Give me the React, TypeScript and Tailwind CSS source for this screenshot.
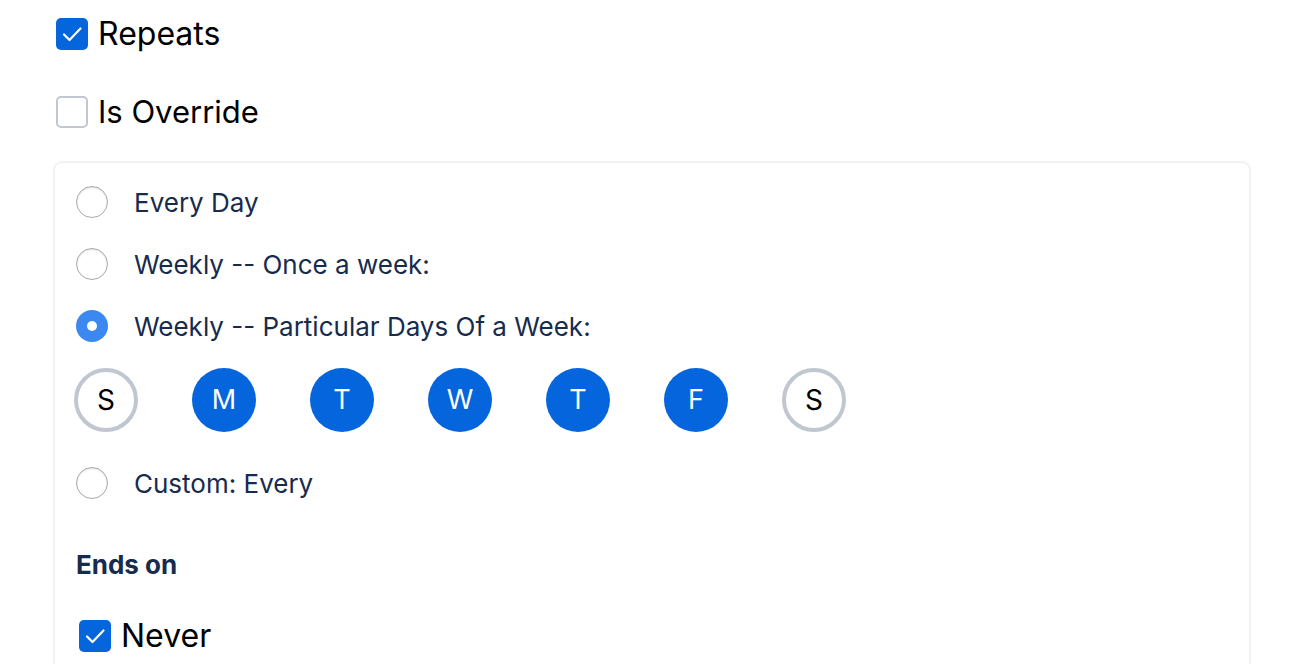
import React, { useState } from 'react';

const DAYS = [
  { label: 'S', on: false },
  { label: 'M', on: true },
  { label: 'T', on: true },
  { label: 'W', on: true },
  { label: 'T', on: true },
  { label: 'F', on: true },
  { label: 'S', on: false },
];

const OPTIONS = ['Every Day', 'Weekly -- Once a week:', 'Weekly -- Particular Days Of a Week:'];

const Check = ({ checked }: { checked: boolean }) =>
  checked ? (
    <span className="flex h-8 w-8 shrink-0 items-center justify-center rounded-[5px] bg-[#0565dc]">
      <svg viewBox="0 0 32 32" className="h-8 w-8" fill="none" stroke="white" strokeWidth="2.2" strokeLinecap="round" strokeLinejoin="round">
        <path d="M8 16.5l5.5 5.5L24.5 10.5" />
      </svg>
    </span>
  ) : (
    <span className="h-8 w-8 shrink-0 rounded-[5px] border-2 border-[#c1c7d0] bg-white" />
  );

const Radio = ({ checked }: { checked: boolean }) =>
  checked ? (
    <span className="flex h-8 w-8 shrink-0 items-center justify-center rounded-full bg-[#3b88f0]">
      <span className="h-[10px] w-[10px] rounded-full bg-white" />
    </span>
  ) : (
    <span className="h-8 w-8 shrink-0 rounded-full border border-[#a9a9a9] bg-white shadow-[inset_0_1px_2px_rgba(0,0,0,0.12)]" />
  );

export default function App() {
  const [selected] = useState(2);

  return (
    <div className="min-h-[664px] bg-white font-['Inter',sans-serif]">
      <div className="pl-[56px] pr-[39px] pt-[18px]">
        <label className="flex h-8 items-center gap-[10px] text-[32px] text-black">
          <Check checked />
          <span>Repeats</span>
        </label>
        <label className="mt-[46px] flex h-8 items-center gap-[10px] text-[31px] text-black">
          <Check checked={false} />
          <span>Is Override</span>
        </label>
      </div>

      <div className="ml-[53px] mr-[39px] mt-[33px] rounded-[9px] border-2 border-[#f2f2f2] pb-6 pl-[21px] pt-[23px]">
        <div className="flex flex-col gap-[30px]">
          {OPTIONS.map((opt, i) => (
            <div key={opt} className="flex h-8 items-center gap-[26px] text-[26px] text-[#172b4d]">
              <Radio checked={selected === i} />
              <span>{opt}</span>
            </div>
          ))}
        </div>

        <div className="-ml-[2px] mt-[26px] flex gap-[54px]">
          {DAYS.map((d, i) =>
            d.on ? (
              <span key={i} className="flex h-16 w-16 items-center justify-center rounded-full bg-[#0565dc] text-[27px] text-white">
                {d.label}
              </span>
            ) : (
              <span key={i} className="flex h-16 w-16 items-center justify-center rounded-full border-4 border-[#c1c7d0] bg-white text-[28px] text-black">
                {d.label}
              </span>
            ),
          )}
        </div>

        <div className="mt-[35px] flex h-8 items-center gap-[26px] text-[26px] text-[#172b4d]">
          <Radio checked={false} />
          <span>Custom: Every</span>
        </div>

        <div className="mt-[50px] text-[26px] font-bold leading-8 text-[#172b4d]">Ends on</div>

        <label className="mt-[39px] flex h-8 items-center gap-[10px] pl-[3px] text-[32px] text-black">
          <Check checked />
          <span>Never</span>
        </label>
      </div>
    </div>
  );
}
